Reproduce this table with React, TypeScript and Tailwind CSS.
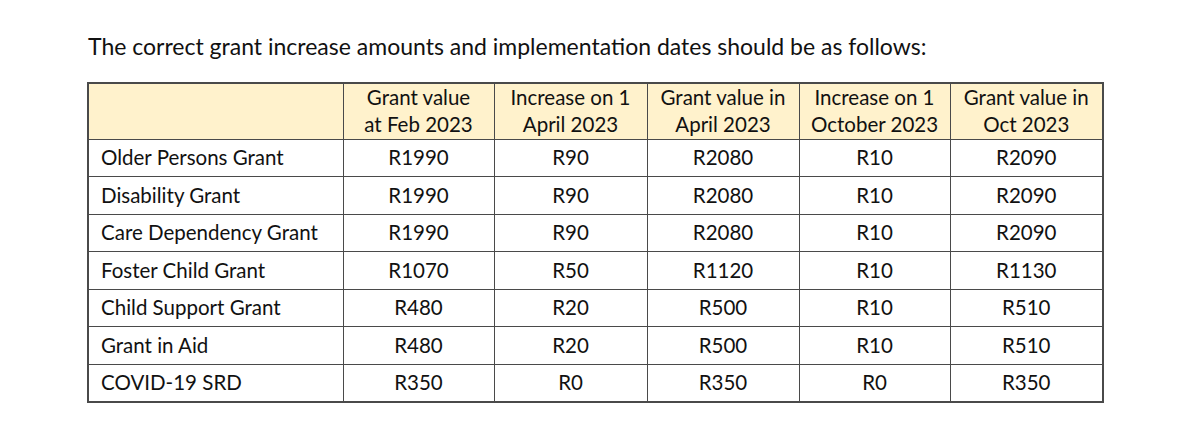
const headers = [
  ['Grant value', 'at Feb 2023'],
  ['Increase on 1', 'April 2023'],
  ['Grant value in', 'April 2023'],
  ['Increase on 1', 'October 2023'],
  ['Grant value in', 'Oct 2023'],
];

const rows: [string, string, string, string, string, string][] = [
  ['Older Persons Grant', 'R1990', 'R90', 'R2080', 'R10', 'R2090'],
  ['Disability Grant', 'R1990', 'R90', 'R2080', 'R10', 'R2090'],
  ['Care Dependency Grant', 'R1990', 'R90', 'R2080', 'R10', 'R2090'],
  ['Foster Child Grant', 'R1070', 'R50', 'R1120', 'R10', 'R1130'],
  ['Child Support Grant', 'R480', 'R20', 'R500', 'R10', 'R510'],
  ['Grant in Aid', 'R480', 'R20', 'R500', 'R10', 'R510'],
  ['COVID-19 SRD', 'R350', 'R0', 'R350', 'R0', 'R350'],
];

export default function App() {
  return (
    <div className="w-[1200px] h-[431px] bg-white text-[#111] font-['Lato',sans-serif] pl-[87px] pt-[32px]">
      {/* Intro line */}
      <p className="text-[23px] leading-[29px] pl-[1px]">
        The correct grant increase amounts and implementation dates should be as follows:
      </p>

      {/* Grant table */}
      <table className="mt-[21px] w-[1015px] border-collapse border-2 border-[#4a4a4a] table-fixed text-[20.5px]">
        <colgroup>
          <col className="w-[255px]" />
          <col className="w-[151px]" />
          <col className="w-[153px]" />
          <col className="w-[152px]" />
          <col className="w-[151px]" />
          <col className="w-[153px]" />
        </colgroup>
        <thead>
          <tr className="bg-[#fff2cc] h-[56px]">
            <th className="border border-[#4a4a4a]" />
            {headers.map((h, i) => (
              <th key={i} className="border border-[#4a4a4a] font-normal leading-[27px] text-center align-middle">
                {h[0]}
                <br />
                {h[1]}
              </th>
            ))}
          </tr>
        </thead>
        <tbody>
          {rows.map((r) => (
            <tr key={r[0]} className="h-[37.5px]">
              {r.map((c, i) => (
                <td
                  key={i}
                  className={
                    i === 0
                      ? 'border border-[#4a4a4a] px-[12px] text-left'
                      : 'border border-[#4a4a4a] text-center'
                  }
                >
                  {c}
                </td>
              ))}
            </tr>
          ))}
        </tbody>
      </table>
    </div>
  );
}
